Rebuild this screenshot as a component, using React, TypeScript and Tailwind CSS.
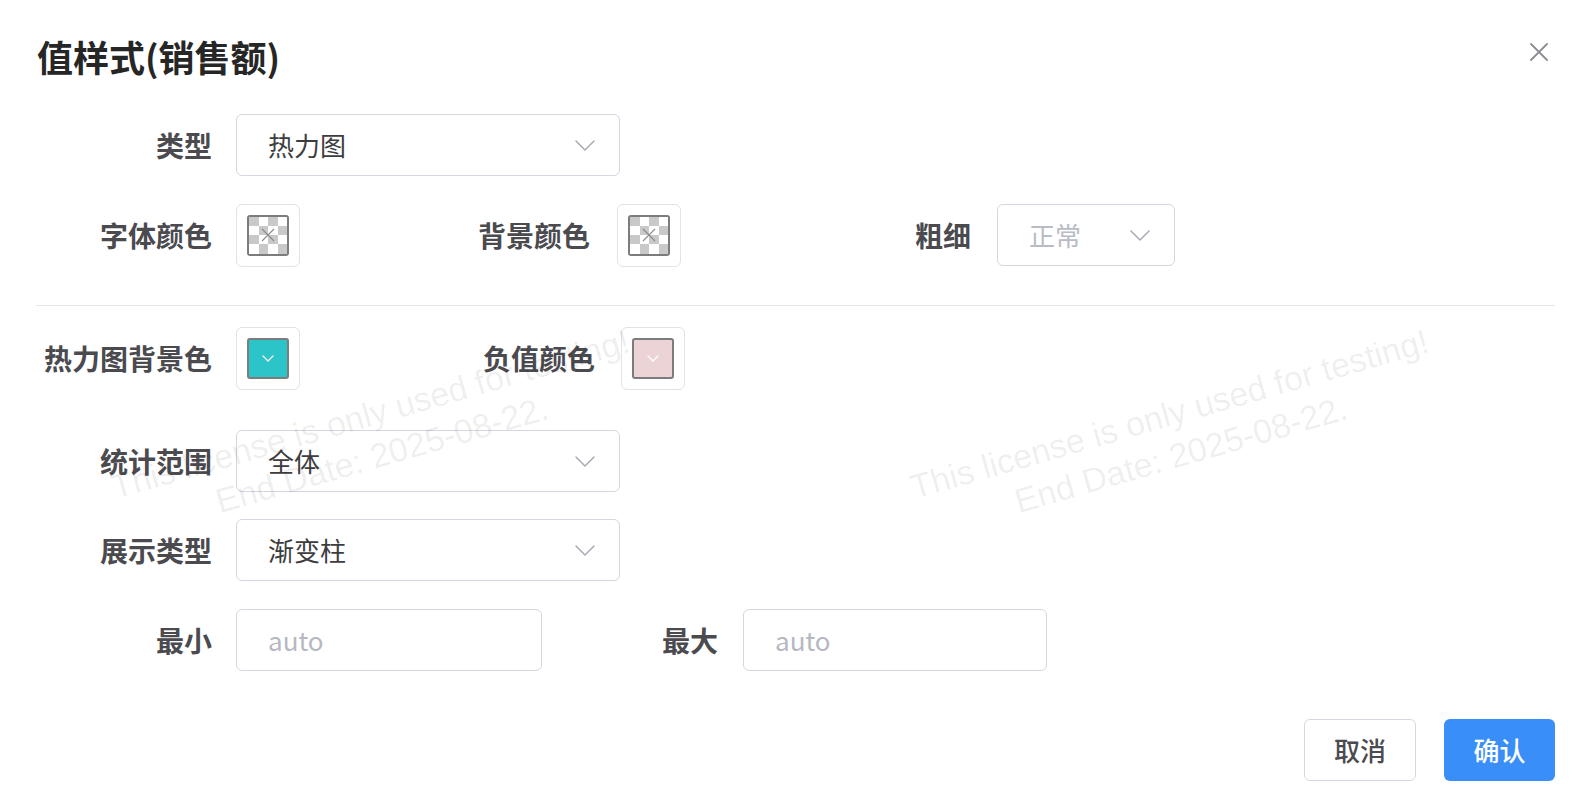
import React from "react";

function Chevron({ className = "" }: { className?: string }) {
  return (
    <svg width="20" height="11" viewBox="0 0 20 11" className={className}>
      <path d="M1 1 L10 10 L19 1" fill="none" stroke="#a8abb5" strokeWidth="1.5" strokeLinecap="round" strokeLinejoin="round" />
    </svg>
  );
}

function SmallChevron() {
  return (
    <svg width="12" height="7" viewBox="0 0 12 7">
      <path d="M1 1 L6 6 L11 1" fill="none" stroke="#ffffff" strokeWidth="1.2" strokeLinecap="round" strokeLinejoin="round" />
    </svg>
  );
}

function Label({ text, cls }: { text: string; cls: string }) {
  return (
    <div className={`${cls} shrink-0 text-right text-[28px] leading-[38px] font-semibold text-[#4a4a4f] whitespace-nowrap`}>
      {text}
    </div>
  );
}

function Select({ value, w, muted = false }: { value: string; w: string; muted?: boolean }) {
  return (
    <div
      className={`${w} h-[62px] shrink-0 border border-[#d4d7e0] rounded-[6px] bg-white flex items-center justify-between pl-[31px] pr-[24px]`}
    >
      <span className={`text-[26px] leading-[36px] ${muted ? "text-[#b9bcc6]" : "text-[#3d3d40]"}`}>{value}</span>
      <Chevron />
    </div>
  );
}

function Input({ w }: { w: string }) {
  return (
    <div className={`${w} h-[62px] shrink-0 border border-[#d4d7e0] rounded-[6px] bg-white flex items-center pl-[31px]`}>
      <span className="text-[26px] leading-[36px] text-[#b5b8c2]">auto</span>
    </div>
  );
}

function CheckerSwatch() {
  const cells = Array.from({ length: 16 }, (_, i) => {
    const r = Math.floor(i / 4);
    const c = i % 4;
    return (r + c) % 2 === 0;
  });
  return (
    <div className="w-[64px] h-[63px] shrink-0 border border-[#e2e3e7] rounded-[6px] p-[10px] bg-white">
      <div className="relative w-full h-full border-2 border-[#7c7c7c] rounded-[3px] overflow-hidden grid grid-cols-4 grid-rows-4">
        {cells.map((g, i) => (
          <div key={i} className={g ? "bg-[#c9c9c9]" : "bg-white"} />
        ))}
        <svg width="14" height="14" viewBox="0 0 14 14" className="absolute left-1/2 top-1/2 -translate-x-1/2 -translate-y-1/2">
          <path d="M1 1 L13 13 M13 1 L1 13" stroke="#8a8a8a" strokeWidth="1.1" />
        </svg>
      </div>
    </div>
  );
}

function ColorSwatch({ color }: { color: string }) {
  return (
    <div className="w-[64px] h-[63px] shrink-0 border border-[#e2e3e7] rounded-[6px] p-[10px] bg-white">
      <div className={`w-full h-full border-2 border-[#7c7c7c] rounded-[3px] flex items-center justify-center ${color}`}>
        <SmallChevron />
      </div>
    </div>
  );
}

function Watermark({ pos }: { pos: string }) {
  return (
    <div
      className={`absolute ${pos} -translate-x-1/2 -translate-y-1/2 -rotate-[16deg] text-center whitespace-nowrap text-[34px] leading-[42px] text-[rgba(0,0,0,0.075)] font-['Liberation_Sans',Arial,sans-serif]`}
    >
      <div>This license is only used for testing!</div>
      <div>End Date: 2025-08-22.</div>
    </div>
  );
}

export default function App() {
  return (
    <div className="relative w-[1590px] h-[798px] bg-white overflow-hidden font-['Noto_Sans_CJK_SC','Noto_Sans',sans-serif]">
      <div className="px-[36px] pr-[35px] pt-[31px]">
        {/* Header */}
        <div className="flex items-start justify-between h-[50px]">
          <div className="text-[36px] leading-[50px] font-bold text-[#262626] pl-[1px]">值样式(销售额)</div>
          <svg width="18" height="18" viewBox="0 0 18 18" className="mt-[12px] mr-[7px]">
            <path d="M1 1 L17 17 M17 1 L1 17" stroke="#8c8c92" strokeWidth="1.8" strokeLinecap="round" />
          </svg>
        </div>

        {/* Row 1 */}
        <div className="mt-[33px] flex items-center h-[62px]">
          <Label text="类型" cls="w-[176px] mr-[24px]" />
          <Select value="热力图" w="w-[384px]" />
        </div>

        {/* Row 2 */}
        <div className="mt-[28px] flex items-center h-[62px]">
          <div className="w-[381px] flex items-center shrink-0">
            <Label text="字体颜色" cls="w-[176px] mr-[24px]" />
            <CheckerSwatch />
          </div>
          <div className="w-[380px] flex items-center shrink-0">
            <Label text="背景颜色" cls="w-[173px] mr-[27px]" />
            <CheckerSwatch />
          </div>
          <div className="flex items-center">
            <Label text="粗细" cls="w-[174px] mr-[26px]" />
            <Select value="正常" w="w-[178px]" muted />
          </div>
        </div>

        {/* Divider */}
        <div className="mt-[39px] h-px bg-[#e6e6e8]" />

        {/* Row 3 */}
        <div className="mt-[21px] flex items-center h-[62px]">
          <div className="w-[385px] flex items-center shrink-0">
            <Label text="热力图背景色" cls="w-[176px] mr-[24px]" />
            <ColorSwatch color="bg-[#2bc4c8]" />
          </div>
          <div className="flex items-center">
            <Label text="负值颜色" cls="w-[174px] mr-[26px]" />
            <ColorSwatch color="bg-[#ecd3d5]" />
          </div>
        </div>

        {/* Row 4 */}
        <div className="mt-[41px] flex items-center h-[62px]">
          <Label text="统计范围" cls="w-[176px] mr-[24px]" />
          <Select value="全体" w="w-[384px]" />
        </div>

        {/* Row 5 */}
        <div className="mt-[27px] flex items-center h-[62px]">
          <Label text="展示类型" cls="w-[176px] mr-[24px]" />
          <Select value="渐变柱" w="w-[384px]" />
        </div>

        {/* Row 6 */}
        <div className="mt-[28px] flex items-center h-[62px]">
          <div className="w-[507px] flex items-center shrink-0">
            <Label text="最小" cls="w-[176px] mr-[24px]" />
            <Input w="w-[306px]" />
          </div>
          <div className="flex items-center">
            <Label text="最大" cls="w-[175px] mr-[25px]" />
            <Input w="w-[304px]" />
          </div>
        </div>

        {/* Footer */}
        <div className="mt-[48px] flex justify-end gap-[28px]">
          <button className="w-[112px] h-[62px] border border-[#d4d7e0] rounded-[6px] bg-white text-[26px] leading-[36px] font-medium text-[#4a4a4f]">
            取消
          </button>
          <button className="w-[111px] h-[62px] rounded-[6px] bg-[#3a8ef7] text-[26px] leading-[36px] font-medium text-white">
            确认
          </button>
        </div>
      </div>

      {/* Watermarks */}
      <div className="absolute inset-0 pointer-events-none">
        <Watermark pos="left-[376px] top-[434px]" />
        <Watermark pos="left-[1175px] top-[434px]" />
      </div>
    </div>
  );
}
